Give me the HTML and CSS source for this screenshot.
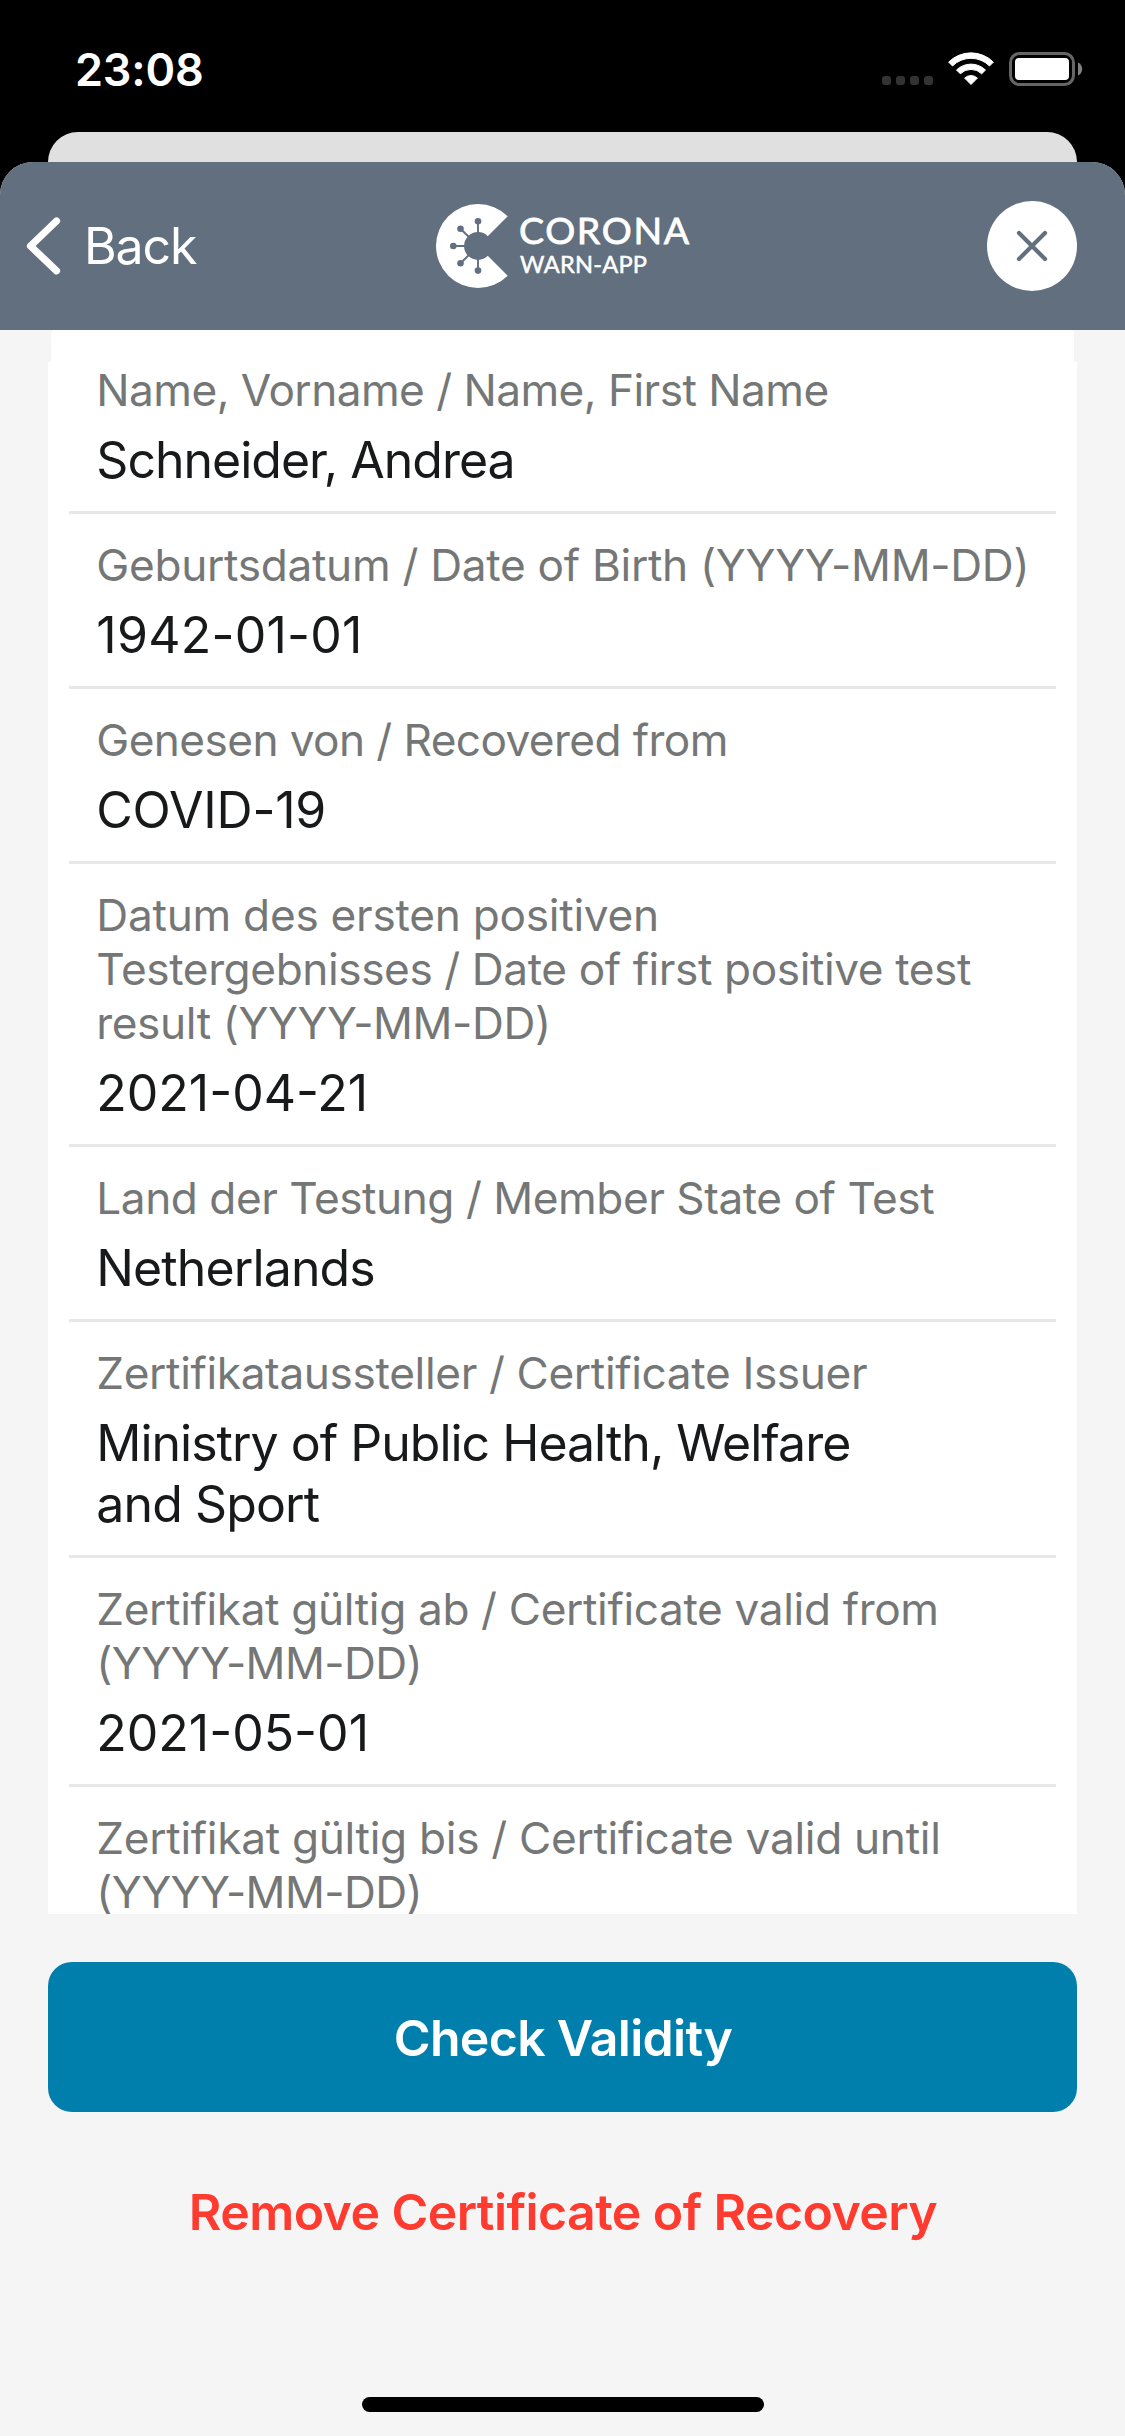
FILE: index.html
```html
<!DOCTYPE html>
<html lang="de">
<head>
<meta charset="utf-8">
<title>Corona-Warn-App</title>
<link rel="stylesheet" href="styles.css">
</head>
<body>
<div class="screen">
  <div class="status-bar">
    <span class="time">23:08</span>
    <svg class="status-icons" width="204" height="40" viewBox="880 49 204 40" aria-hidden="true">
      <g fill="#333">
        <rect x="882" y="76" width="9" height="9" rx="3"/>
        <rect x="896" y="76" width="9" height="9" rx="3"/>
        <rect x="910" y="76" width="9" height="9" rx="3"/>
        <rect x="924" y="76" width="9" height="9" rx="3"/>
      </g>
      <g transform="translate(971 84.5)" fill="#fff" stroke="#fff" stroke-width="1" stroke-linejoin="round">
        <path d="M-22.4-22.4A31.8 31.8 0 0 1 22.4-22.4L18.5-18.5A26.1 26.1 0 0 0-18.5-18.5Z"/>
        <path d="M-14.5-14.5A20.8 20.8 0 0 1 14.5-14.5L10.7-10.7A15.2 15.2 0 0 0-10.7-10.7Z"/>
        <path d="M-6.4-6.4A9.3 9.3 0 0 1 6.4-6.4L0 0Z"/>
      </g>
      <rect x="1010.5" y="53.500" width="63" height="31" rx="9" fill="none" stroke="#666" stroke-width="3"/>
      <rect x="1015" y="58" width="54" height="22" rx="4" fill="#fff"/>
      <path d="M1078 62.500c2.600 1.200 4.200 3.600 4.200 6.500s-1.600 5.300-4.200 6.500z" fill="#808080"/>
    </svg>
  </div>
  <div class="back-sheet"></div>
  <main class="sheet">
    <header class="nav">
      <div class="back">
        <svg width="40" height="60" viewBox="24 216 40 60" aria-hidden="true"><path d="M56.500 221 30.500 246l26 24.800" fill="none" stroke="#fff" stroke-width="7.200" stroke-linecap="round" stroke-linejoin="round"/></svg>
        <span class="back-text">Back</span>
      </div>
      <svg class="logo" width="260" height="88" viewBox="434 202 260 88" role="img" aria-label="Corona Warn-App">
        <path d="M478 246 507.700 216.300A42 42 0 1 0 507.700 275.700Z" fill="#fff"/>
        <g fill="#626f7f" stroke="#626f7f" stroke-width="1.900">
          <circle cx="478" cy="246" r="13" />
          <path d="M478 221v50M453 246h25M460.500 228.700 478 246M460.500 263.300 478 246"/>
          <g stroke="none">
            <circle cx="478" cy="221.300" r="3.300"/><circle cx="478" cy="270.600" r="3.300"/><circle cx="453.300" cy="246" r="3.300"/><circle cx="460.500" cy="228.700" r="3.300"/><circle cx="460.500" cy="263.300" r="3.300"/>
          </g>
        </g>
        <text class="brand" x="519" y="243.800">CORONA</text>
        <text class="brand-sub" x="520" y="272.800">WARN-APP</text>
      </svg>
      <div class="close">
        <svg width="36" height="36" viewBox="-18 -18 36 36" aria-hidden="true"><path d="M-13-13 13 13M13-13-13 13" stroke="#626f7f" stroke-width="4.200" stroke-linecap="round"/></svg>
      </div>
    </header>
    <section class="card">
      <div class="row row-first">
        <div class="label t55">Name, Vorname / Name, First Name</div>
        <div class="value t100">Schneider, Andrea</div>
      </div>
      <div class="row">
        <div class="label t31">Geburtsdatum / Date of Birth (YYYY-MM-DD)</div>
        <div class="value w25">1942-01-01</div>
      </div>
      <div class="row">
        <div class="label t60">Genesen von / Recovered from</div>
        <div class="value t20">COVID-19</div>
      </div>
      <div class="row">
        <div class="label t42"><span class="t27">Datum des ersten positiven</span><br>Testergebnisses / Date of first positive test<br>result (YYYY-MM-DD)</div>
        <div class="value">2021-04-21</div>
      </div>
      <div class="row">
        <div class="label t47">Land der Testung / Member State of Test</div>
        <div class="value t88">Netherlands</div>
      </div>
      <div class="row">
        <div class="label t37">Zertifikataussteller / Certificate Issuer</div>
        <div class="value t100">Ministry of Public Health, Welfare<br><span class="t88">and Sport</span></div>
      </div>
      <div class="row">
        <div class="label t37">Zertifikat gültig ab / Certificate valid from<br><span class="t60">(YYYY-MM-DD)</span></div>
        <div class="value">2021-05-01</div>
      </div>
      <div class="row">
        <div class="label t31">Zertifikat gültig bis / Certificate valid until<br><span class="t60">(YYYY-MM-DD)</span></div>
      </div>
    </section>
    <footer class="actions">
      <div class="button primary">Check Validity</div>
      <div class="button danger">Remove Certificate of Recovery</div>
      <div class="home-indicator"></div>
    </footer>
  </main>
</div>
</body>
</html>
```
FILE: styles.css
```css
* { box-sizing: border-box; }

body {
  margin: 0;
  background: #000;
  font-family: Inter, "Liberation Sans", sans-serif;
}

.screen {
  display: flex;
  flex-direction: column;
  width: 1125px;
  height: 2436px;
  overflow: hidden;
  background: #000;
}

.status-bar {
  display: flex;
  align-items: center;
  justify-content: space-between;
  height: 132px;
  padding: 6px 41px 0 75px;
  color: #fff;
}

.time {
  font-size: 45px;
  font-weight: 600;
  letter-spacing: -0.2px;
}

/* The sheet underneath shows above the front one. */
.back-sheet {
  height: 70px;
  margin: 0 48px -40px;
  border-radius: 30px 30px 0 0;
  background: #e0e0e0;
}

.sheet {
  display: flex;
  flex: 1;
  flex-direction: column;
  min-height: 0;
  border-radius: 33px 33px 0 0;
  overflow: hidden;
  background: #f5f5f5;
  z-index: 1;
}

.nav {
  display: grid;
  grid-template-columns: 1fr auto 1fr;
  align-items: center;
  flex: none;
  height: 168px;
  padding: 0 48px 0 24px;
  background: #626f7f;
}

.back {
  display: flex;
  align-items: center;
  gap: 20px;
}

.back-text {
  color: #fff;
  font-size: 50px;
  letter-spacing: -1.1px;
}

.logo { margin-left: 27px; }

.brand, .brand-sub {
  fill: #fff;
  stroke: #fff;
  font-family: Lato, sans-serif;
}

.brand {
  font-size: 37.5px;
  stroke-width: 0.8px;
  letter-spacing: 1.65px;
}

.brand-sub {
  font-size: 23.6px;
  stroke-width: 0.5px;
  letter-spacing: 0.25px;
}

.close {
  display: flex;
  align-items: center;
  justify-content: center;
  justify-self: end;
  width: 90px;
  height: 90px;
  border-radius: 50%;
  background: #fff;
}

.card {
  flex: none;
  height: 1584px;
  margin: 0 48px;
  border-radius: 6px 6px 0 0 / 12px 12px 0 0;
  overflow: hidden;
  background:
    linear-gradient(#fff, #fff) 3px 0 / 1023px 33px no-repeat,
    linear-gradient(#fff, #fff) 0 32px / 100% 100% no-repeat;
}

.row {
  margin: 0 21px;
  padding: 24px 0 20px 27.3px;
  border-bottom: 3px solid #e8e8e8;
}

.row-first { padding-top: 33px; }

.label {
  color: #757777;
  font-size: 44.2px;
  line-height: 54px;
  white-space: nowrap;
}

.value {
  margin-top: 13px;
  color: #17191a;
  font-size: 50px;
  line-height: 61px;
  white-space: nowrap;
}

/* Tracking: t tightens, w widens, in hundredths of a pixel. */
.t20 { letter-spacing: -0.2px; }
.t27 { letter-spacing: -0.27px; }
.t31 { letter-spacing: -0.31px; }
.t37 { letter-spacing: -0.37px; }
.t42 { letter-spacing: -0.42px; }
.t47 { letter-spacing: -0.47px; }
.t55 { letter-spacing: -0.55px; }
.t60 { letter-spacing: -0.6px; }
.t88 { letter-spacing: -0.88px; }
.t100 { letter-spacing: -1px; }
.w25 { letter-spacing: 0.25px; }

.actions {
  display: flex;
  flex: 1;
  flex-direction: column;
  gap: 24px;
  padding: 48px 48px 24px;
}

.button {
  display: flex;
  align-items: center;
  justify-content: center;
  height: 150px;
  padding: 2px 0 0 1px;
  border-radius: 24px;
  font-size: 50px;
  font-weight: 600;
}

.primary {
  background: #007fad;
  color: #fff;
  letter-spacing: -0.69px;
}

.danger {
  color: #ff3b30;
  letter-spacing: -0.58px;
}

.home-indicator {
  align-self: center;
  width: 402px;
  height: 15px;
  margin-top: auto;
  border-radius: 8px;
  background: #000;
}
```
